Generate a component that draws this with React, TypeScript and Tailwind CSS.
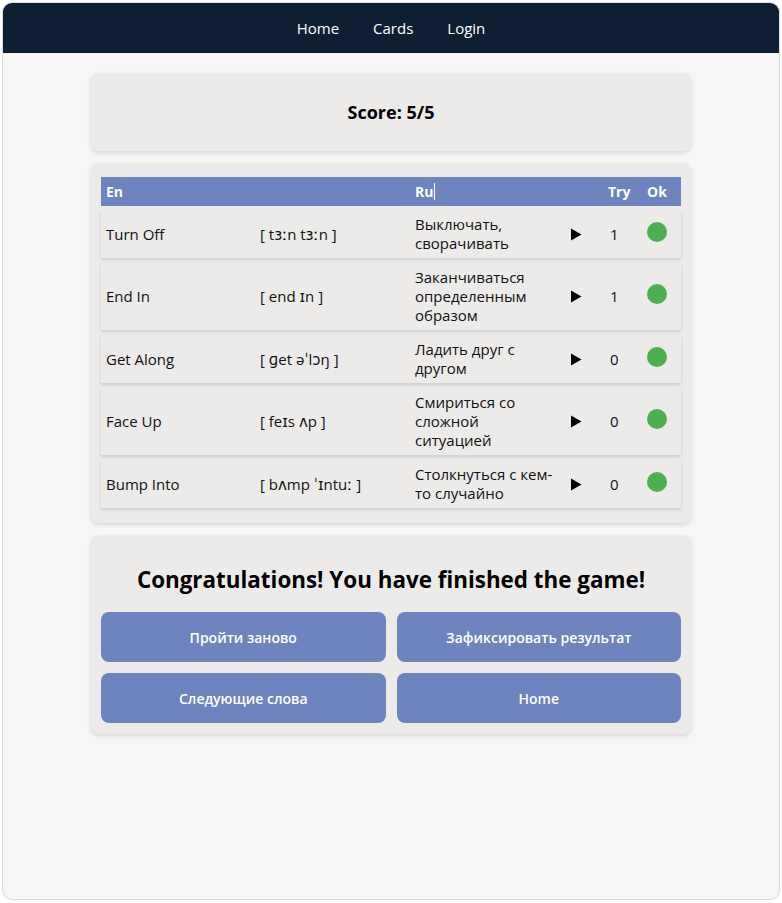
import React from "react";

const words = [
  { en: "Turn Off", tr: "[ tɜːn tɜːn ]", ru: "Выключать, сворачивать", tries: 1 },
  { en: "End In", tr: "[ end ɪn ]", ru: "Заканчиваться определенным образом", tries: 1 },
  { en: "Get Along", tr: "[ ɡet əˈlɔŋ ]", ru: "Ладить друг с другом", tries: 0 },
  { en: "Face Up", tr: "[ feɪs ʌp ]", ru: "Смириться со сложной ситуацией", tries: 0 },
  { en: "Bump Into", tr: "[ bʌmp ˈɪntuː ]", ru: "Столкнуться с кем-то случайно", tries: 0 },
];

const buttons = ["Пройти заново", "Зафиксировать результат", "Следующие слова", "Home"];

const cols = "grid grid-cols-[154px_155px_155px_38px_39px_1fr] items-center pl-[5px]";

const App = () => {
  return (
    <div
      className="bg-white p-[2px] min-h-[903px]"
      style={{ fontFamily: '"Open Sans", "DejaVu Sans", sans-serif' }}
    >
      <div className="min-h-[898px] rounded-[10px] border border-[#dcdcdc] bg-[#f6f6f6] overflow-hidden">
        {/* nav */}
        <nav className="h-[50px] bg-[#0f1f33] flex items-center justify-center gap-[34px] text-white text-[15px]">
          <a>Home</a>
          <a>Cards</a>
          <a>Login</a>
        </nav>

        <div className="w-[600px] mx-auto pt-[20px] flex flex-col gap-[12px]">
          {/* score */}
          <div className="h-[78px] rounded-lg bg-[#ecebea] shadow-[0_2px_4px_rgba(0,0,0,0.12)] flex items-center justify-center">
            <span className="text-[18px] font-bold text-black">Score: 5/5</span>
          </div>

          {/* table */}
          <div className="rounded-lg bg-[#ecebea] shadow-[0_2px_4px_rgba(0,0,0,0.12)] px-[10px] pt-[14px] pb-[15px]">
            <div className={`${cols} h-[29px] bg-[#6d84be] text-white font-bold text-[14px]`}>
              <span>En</span>
              <span></span>
              <span className="flex items-center">
                Ru<span className="inline-block w-px h-[17px] bg-white ml-px"></span>
              </span>
              <span></span>
              <span>Try</span>
              <span>Ok</span>
            </div>
            <div className="flex flex-col gap-[5px] mt-[4px]">
              {words.map((w, i) => (
                <div
                  key={i}
                  className={`${cols} min-h-[48px] py-[5px] bg-[#ecebea] shadow-[0_2px_3px_rgba(0,0,0,0.12)] text-[15px] text-[#111] leading-[19px]`}
                >
                  <span>{w.en}</span>
                  <span>{w.tr}</span>
                  <span className="pr-[14px]">{w.ru}</span>
                  <span>
                    <svg width="12" height="13" viewBox="0 0 12 13">
                      <path d="M1 0.5 L11.5 6.5 L1 12.5 Z" fill="#000" />
                    </svg>
                  </span>
                  <span className="pl-[2px]">{w.tries}</span>
                  <span>
                    <span className="block w-[20px] h-[20px] rounded-full bg-[#4caf50] -mt-[5px]"></span>
                  </span>
                </div>
              ))}
            </div>
          </div>

          {/* finished */}
          <div className="rounded-lg bg-[#ecebea] shadow-[0_2px_4px_rgba(0,0,0,0.12)] px-[10px] pt-[26px] pb-[11px]">
            <h2 className="text-center text-[22.4px] font-bold text-black leading-[38px]">
              Congratulations! You have finished the game!
            </h2>
            <div className="grid grid-cols-2 gap-x-[11px] gap-y-[11px] mt-[13px]">
              {buttons.map((b) => (
                <button
                  key={b}
                  className="h-[50px] rounded-lg bg-[#6d84be] text-white text-[14px] font-semibold"
                >
                  {b}
                </button>
              ))}
            </div>
          </div>
        </div>
      </div>
    </div>
  );
};

export default App;
